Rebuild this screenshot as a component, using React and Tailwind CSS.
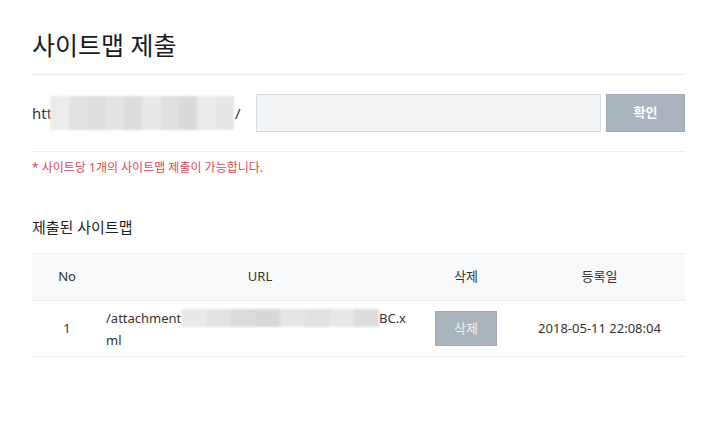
import React from 'react';

const font = { fontFamily: '"Noto Sans", "Noto Sans CJK KR", sans-serif' };

// pixelated blur that hides part of a url
const Mosaic = ({ tiles, className }) => (
  <span className={`inline-flex align-middle blur-[1px] ${className}`}>
    {tiles.map((c, i) => (
      <span key={i} className={`h-full flex-1 ${c}`} />
    ))}
  </span>
);

const App = () => {
  return (
    <div style={font} className="h-[427px] w-[720px] overflow-hidden bg-white pt-[28px] pr-[35px] pl-[32px] text-[#222]">
      <h1 className="border-b border-[#eceef0] pb-[12px] text-[25px] leading-[34px] font-normal text-[#1a1a1a]">
        사이트맵 제출
      </h1>

      <div className="flex items-center border-b border-[#eceef0] py-[19px]">
        <div className="flex w-[224px] items-center text-[15px] text-[#333]">
          <span>htt</span>
          <Mosaic
            className="ml-[-2px] h-[34px] w-[184px]"
            tiles={['bg-[#ececec]', 'bg-[#e2e2e2]', 'bg-[#dedede]', 'bg-[#e4e4e4]', 'bg-[#dcdcdc]', 'bg-[#e9e9e9]', 'bg-[#e0e0e0]', 'bg-[#dadada]', 'bg-[#ebebeb]', 'bg-[#e6e6e6]']}
          />
          <span className="ml-[1px]">/</span>
        </div>
        <input
          type="text"
          className="h-[38px] w-[345px] border border-[#d7dae0] bg-[#f3f4f6] px-3 text-sm outline-none"
        />
        <button className="ml-[5px] h-[38px] w-[79px] border border-[#9ea8b3] bg-[#aab4be] text-[13px] font-bold text-white">
          확인
        </button>
      </div>

      <p className="mt-[7px] text-[12px] leading-[18px] text-[#e0485a]">* 사이트당 1개의 사이트맵 제출이 가능합니다.</p>

      <h2 className="mt-[39px] text-[15px] leading-[22px] font-normal text-[#1f1f1f]">제출된 사이트맵</h2>

      <table className="mt-[15px] w-full table-fixed border-collapse text-[13px] text-[#333]">
        <thead>
          <tr className="h-[47px] border-t border-b border-[#eceef0] bg-[#f8f9fa]">
            <th className="w-[70px] font-normal">No</th>
            <th className="w-[316px] font-normal">URL</th>
            <th className="w-[96px] font-normal">삭제</th>
            <th className="font-normal">등록일</th>
          </tr>
        </thead>
        <tbody>
          <tr className="h-[56px] border-b border-[#eceef0]">
            <td className="text-center">1</td>
            <td className="pl-[4px] pr-[12px] leading-[22px]">
              <div className="flex items-center">
                <span>/attachment</span>
                <Mosaic
                  className="h-[18px] w-[206px]"
                  tiles={['bg-[#e9e9e9]', 'bg-[#e4e4e4]', 'bg-[#dbdbdb]', 'bg-[#d8d8d8]', 'bg-[#e6e6e6]', 'bg-[#e1e1e1]', 'bg-[#e8e8e8]', 'bg-[#dcdcdc]']}
                />
                <span>BC.x</span>
              </div>
              <div>ml</div>
            </td>
            <td className="text-center">
              <button className="h-[35px] w-[62px] border border-[#9ea8b3] bg-[#aab4be] text-[13px] text-[#eef1f4]">
                삭제
              </button>
            </td>
            <td className="text-center">2018-05-11 22:08:04</td>
          </tr>
        </tbody>
      </table>
    </div>
  );
};

export default App;
